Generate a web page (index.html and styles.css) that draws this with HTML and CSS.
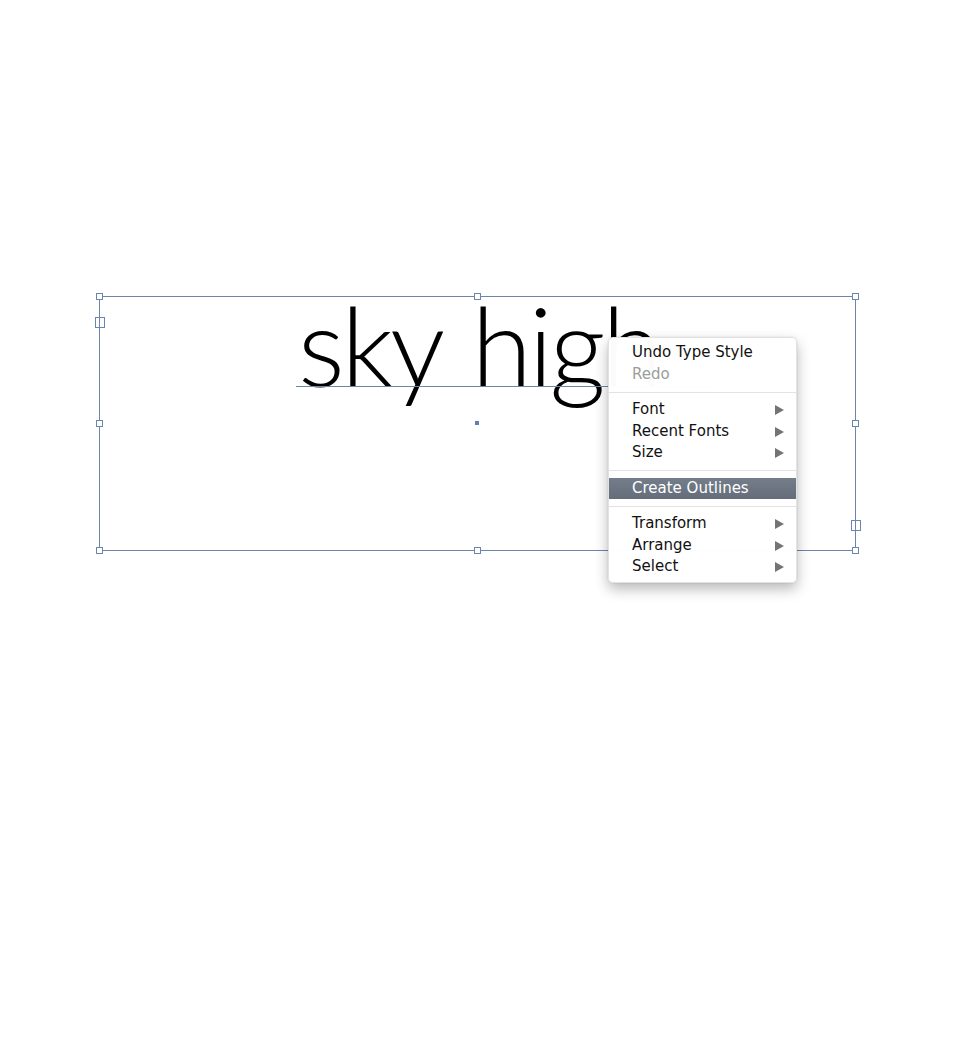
FILE: index.html
```html
<!DOCTYPE html>
<html>
<head>
<meta charset="utf-8">
<link rel="stylesheet" href="styles.css">
</head>
<body>
<div class="stage">
  <div class="selection">
    <div class="type-line">
      <span class="baseline"></span>
      <span class="words">sky high</span>
    </div>
  </div>
  <span class="handle h-tl"></span>
  <span class="handle h-tc"></span>
  <span class="handle h-tr"></span>
  <span class="handle h-ml"></span>
  <span class="handle h-mr"></span>
  <span class="handle h-bl"></span>
  <span class="handle h-bc"></span>
  <span class="handle h-br"></span>
  <span class="port port-in"></span>
  <span class="port port-out"></span>
  <span class="center-dot"></span>

  <div class="menu">
    <div class="item">Undo Type Style</div>
    <div class="item disabled">Redo</div>
    <div class="sep"></div>
    <div class="item sub">Font</div>
    <div class="item sub">Recent Fonts</div>
    <div class="item sub">Size</div>
    <div class="sep"></div>
    <div class="item active">Create Outlines</div>
    <div class="sep"></div>
    <div class="item sub">Transform</div>
    <div class="item sub">Arrange</div>
    <div class="item sub">Select</div>
  </div>
</div>
</body>
</html>
```

FILE: styles.css
```css
html, body {
  margin: 0;
  padding: 0;
  background: #ffffff;
}

.stage {
  position: relative;
  width: 980px;
  height: 1050px;
  overflow: hidden;
}

.selection {
  position: absolute;
  left: 99px;
  top: 296px;
  width: 757px;
  height: 255px;
  box-sizing: border-box;
  border: 1px solid #6a86ad;
}

.type-line {
  position: relative;
  padding-top: 2.5px;
  padding-left: 198px;
  height: 120px;
  box-sizing: border-box;
}

.words {
  display: block;
  font-family: "Lato", "DejaVu Sans", sans-serif;
  font-weight: 300;
  font-size: 110px;
  letter-spacing: -3.5px;
  word-spacing: 6px;
  line-height: 0.8;
  color: #000;
  white-space: nowrap;
}

.baseline {
  position: absolute;
  left: 196px;
  top: 89px;
  width: 420px;
  height: 1px;
  background: #6a86ad;
}

.handle {
  position: absolute;
  width: 5px;
  height: 5px;
  border: 1px solid #6a86ad;
  background: #fff;
}
.h-tl { left: 96px; top: 293px; }
.h-tc { left: 474px; top: 293px; }
.h-tr { left: 852px; top: 293px; }
.h-ml { left: 96px; top: 420px; }
.h-mr { left: 852px; top: 420px; }
.h-bl { left: 96px; top: 547px; }
.h-bc { left: 474px; top: 547px; }
.h-br { left: 852px; top: 547px; }

.port {
  position: absolute;
  width: 8px;
  height: 9px;
  border: 1px solid #6a86ad;
  background: #fff;
}
.port::after {
  content: "";
  position: absolute;
  left: 3px;
  top: 0;
  width: 1px;
  height: 9px;
  background: #6a86ad;
}
.port-in { left: 95px; top: 317px; }
.port-out { left: 851px; top: 520px; }

.center-dot {
  position: absolute;
  left: 475px;
  top: 421px;
  width: 4px;
  height: 4px;
  background: #5f7fb0;
}

.menu {
  position: absolute;
  left: 608px;
  top: 337px;
  width: 189px;
  box-sizing: border-box;
  padding: 4px 0 4px;
  background: rgba(255, 255, 255, 0.985);
  border: 1px solid #e2e2e2;
  border-radius: 5px;
  box-shadow: 0 6px 14px rgba(0, 0, 0, 0.28), 0 0 2px rgba(0, 0, 0, 0.12);
  font-family: "DejaVu Sans", "Liberation Sans", sans-serif;
  font-size: 15px;
  color: #111;
}

.item {
  position: relative;
  height: 21.5px;
  line-height: 21.5px;
  padding-left: 23px;
  white-space: nowrap;
}

.item.disabled {
  color: #9c9c9c;
}

.item.sub::after {
  content: "";
  position: absolute;
  right: 12px;
  top: 6px;
  width: 0;
  height: 0;
  border-top: 5px solid transparent;
  border-bottom: 5px solid transparent;
  border-left: 9px solid #747474;
}

.item.active {
  background: linear-gradient(#747d8a, #646d79);
  color: #fff;
}

.sep {
  height: 1px;
  margin: 6.5px 0 6.5px;
  background: #e3e3e3;
}
```
